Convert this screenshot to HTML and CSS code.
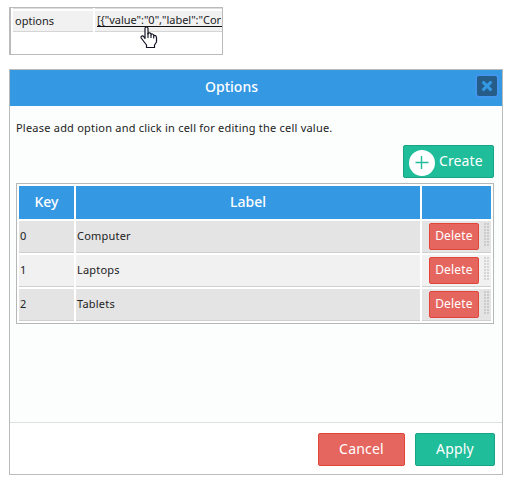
FILE: index.html
```html
<!DOCTYPE html>
<html lang="en">
<head>
<meta charset="utf-8">
<title>Options</title>
<link rel="stylesheet" href="styles.css">
</head>
<body>
<section class="property">
  <div class="property-strip"><span></span><span></span></div>
  <div class="property-row">
    <div class="property-name">options</div>
    <div class="property-value"><a>[{"value":"0","label":"Cor</a></div>
  </div>
  <svg class="pointer" width="18" height="23" viewBox="0 0 18 23">
    <path d="M5 2.5Q5 1 6.5 1T8 2.5V8Q8.2 6.6 9.5 6.8T11 8.2V9Q11.2 7.7 12.4 8T13.7 9.3V10Q14.2 9 15.2 9.5T16.5 11.3V16L14.5 19V21.5H6.5V19L3.8 15.5L1.2 12Q.6 10.5 1.8 10T4 11L5 12.5Z" fill="#fff" stroke="#111122" stroke-width="1.2" stroke-linejoin="round"/>
    <path d="M8 7V12M11 9V12M13.7 10V12.5" stroke="#111122" stroke-width="1.1"/>
  </svg>
</section>

<section class="dialog">
  <header class="dialog-header">
    <h1>Options</h1>
    <button class="close" aria-label="Close"><svg width="12" height="12" viewBox="0 0 12 12"><path d="M1.6 1.6L10.4 10.4M10.4 1.6L1.6 10.4" stroke="#3498e3" stroke-width="3"/></svg></button>
  </header>
  <div class="dialog-body">
    <p class="hint">Please add option and click in cell for editing the cell value.</p>
    <button class="btn create"><svg width="26" height="26" viewBox="0 0 26 26"><circle cx="13" cy="13" r="13" fill="#fff"/><path d="M6.5 12.5H19.5M12.5 6V19" stroke="#20bd9a" stroke-width="1.4"/></svg><span>Create</span></button>
    <div class="grid">
      <div class="th">Key</div><div class="th">Label</div><div class="th"></div>
      <div class="td">0</div><div class="td">Computer</div><div class="td actions"><button class="btn delete">Delete</button><i class="grip"></i></div>
      <div class="td alt">1</div><div class="td alt">Laptops</div><div class="td alt actions"><button class="btn delete">Delete</button><i class="grip"></i></div>
      <div class="td">2</div><div class="td">Tablets</div><div class="td actions"><button class="btn delete">Delete</button><i class="grip"></i></div>
    </div>
  </div>
  <footer class="dialog-footer">
    <button class="btn cancel">Cancel</button>
    <button class="btn apply">Apply</button>
  </footer>
</section>
</body>
</html>
```
FILE: styles.css
```css
* { box-sizing: border-box; }
body {
  margin: 0;
  padding: 7px 0 0 9px;
  height: 485px;
  overflow: hidden;
  background: #fff;
  color: #222;
  font: 11px/16px "Noto Sans", sans-serif;
}
button { font-family: inherit; padding: 0; margin: 0; }
.property {
  position: relative;
  width: 214px;
  height: 48px;
  border: 1px solid #bbb;
  border-left-width: 2px;
  padding-left: 2px;
}
.property-strip, .property-row {
  display: grid;
  grid-template-columns: 80px minmax(0, 1fr);
  column-gap: 2px;
}
.property-strip { height: 1px; margin-bottom: 2px; }
.property-strip span { background: #ddd; }
.property-name, .property-value {
  height: 21px;
  background: #f1f1f1;
  border-bottom: 1px solid #d5d5d5;
  padding-left: 2px;
  line-height: 20px;
  white-space: nowrap;
}
.property-value a {
  display: block;
  height: 16px;
  line-height: 18px;
  border-bottom: 1px solid #111;
  letter-spacing: -0.03px;
}
.pointer { position: absolute; left: 129px; top: 18px; }

.dialog {
  display: flex;
  flex-direction: column;
  margin-top: 14px;
  width: 494px;
  height: 406px;
  border: 1px solid #bbb;
  background: #fcfefd;
}
.dialog-header {
  display: flex;
  height: 36px;
  background: #3498e3;
  color: #fff;
  padding: 0 5px 0 0;
}
.dialog-header h1 {
  flex: 1;
  margin: 0;
  padding-right: 24px;
  text-align: center;
  font-size: 14px;
  font-weight: 500;
  line-height: 34px;
}
.close {
  width: 20px;
  height: 20px;
  margin-top: 6px;
  border: 0;
  border-radius: 2px;
  background: #265c88;
  box-shadow: 0 0 0 2px #4196ee;
  display: flex;
  align-items: center;
  justify-content: center;
}
.dialog-body {
  flex: 1;
  padding: 14px 8px 0 6px;
  display: flex;
  flex-direction: column;
}
.hint { margin: 0; height: 25px; white-space: nowrap; letter-spacing: 0.22px; }
.btn {
  border: 1px solid;
  border-radius: 2px;
  color: #fff;
  font-size: 14px;
  line-height: 30px;
}
.create {
  align-self: flex-end;
  display: flex;
  align-items: center;
  width: 91px;
  height: 33px;
  padding-left: 5px;
  gap: 4px;
}
.create svg { margin-top: 2px; }
.create span { margin-top: -2px; letter-spacing: 0.1px; }
.create, .apply { background: #20bd9a; border-color: #18a486; }
.cancel, .delete { background: #e5665f; border-color: #e04538; }
.grid {
  margin-top: 5px;
  width: 478px;
  height: 141px;
  padding: 2px;
  border: 1px solid #b5b8b8;
  background: #fff;
  display: grid;
  grid-template-columns: 55px 344px 69px;
  grid-template-rows: 33px 32px 32px 32px;
  gap: 2px;
}
.th {
  background: #3498e3;
  color: #fff;
  font-size: 14px;
  font-weight: 500;
  line-height: 32px;
  text-align: center;
}
.td {
  background: #e4e4e4;
  border-bottom: 1px solid #cfcfcf;
  padding-left: 1px;
  line-height: 30px;
  letter-spacing: 0.2px;
}
.td.alt { background: #f1f1f1; }
.td.actions { display: flex; padding: 2px 0 0 7px; gap: 5px; }
.delete { width: 50px; height: 27px; font-size: 12px; line-height: 22px; padding-bottom: 2px; letter-spacing: 0.2px; }
.grip {
  width: 5px;
  height: 23px;
  background: repeating-linear-gradient(90deg, transparent 0 2px, #e4e4e4 2px 3px), repeating-linear-gradient(#cbcbcb 0 2px, #e4e4e4 2px 3px);
}
.alt .grip {
  background: repeating-linear-gradient(90deg, transparent 0 2px, #f1f1f1 2px 3px), repeating-linear-gradient(#d5d5d5 0 2px, #f1f1f1 2px 3px);
}
.dialog-footer {
  height: 52px;
  border-top: 1px solid #dde1e0;
  background: #fff;
  display: flex;
  justify-content: flex-end;
  padding: 10px 7px 0 0;
  gap: 10px;
}
.dialog-footer .btn { height: 33px; padding-bottom: 2px; letter-spacing: 0.2px; }
.cancel { width: 87px; }
.apply { width: 80px; }
```
